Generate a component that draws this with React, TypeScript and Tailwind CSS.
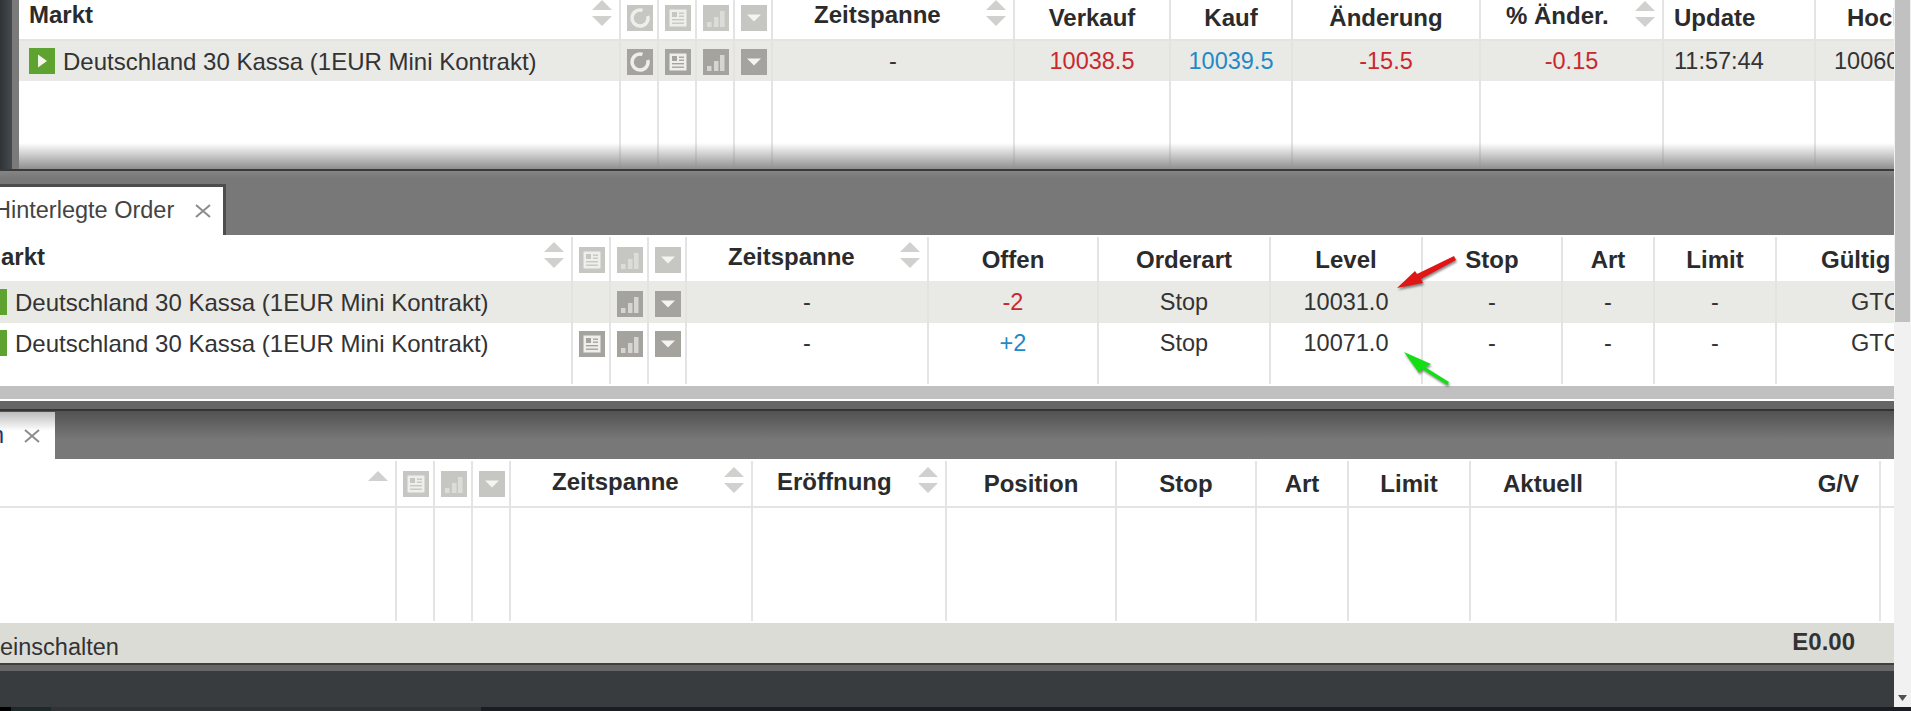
// App.tsx
// Trading platform panels: markets, pending orders, open positions
import type { ReactNode } from 'react';

const line = 'border-r-2 border-[#e4e4e4]';
const rowLine = 'border-r-2 border-[#e3e3e0]';

const red = 'text-[#c9282d]';
const blue = 'text-[#1e8ac6]';
const dark = 'text-[#333333]';

// Panel grids, all columns include their 2px right rule
const marketCols =
  'grid-cols-[602px_38px_38px_38px_38px_242px_156px_122px_188px_183px_152px_232px]';
const orderCols =
  'grid-cols-[602px_38px_38px_38px_242px_170px_172px_152px_140px_92px_122px_156px]';
const positionCols =
  'grid-cols-[397px_38px_38px_38px_242px_194px_170px_140px_92px_122px_146px_264px_14px]';

function SortArrows({ onlyUp }: { onlyUp?: boolean }) {
  return (
    <svg width="20" height="26" viewBox="0 0 20 26" className="shrink-0">
      <path d="M0 10 L10 0 L20 10 Z" fill="#d0d0ce" />
      {!onlyUp && <path d="M0 16 L20 16 L10 26 Z" fill="#d0d0ce" />}
    </svg>
  );
}

function IconBox({ light, children }: { light?: boolean; children: ReactNode }) {
  return (
    <svg width="26" height="26" viewBox="0 0 26 26" className="shrink-0">
      <rect width="26" height="26" fill={light ? '#c6c6c3' : '#a5a39d'} />
      {children}
    </svg>
  );
}

function RefreshIcon({ light }: { light?: boolean }) {
  return (
    <IconBox light={light}>
      <path d="M15.5 5.4 A8 8 0 1 0 20.8 11" fill="none" stroke="#eeeeea" strokeWidth="3.4" />
    </IconBox>
  );
}

function NewsIcon({ light }: { light?: boolean }) {
  const bg = light ? '#c6c6c3' : '#a5a39d';
  return (
    <IconBox light={light}>
      <rect x="4.5" y="4.5" width="17" height="17" fill="#eeeeea" />
      <rect x="7" y="7" width="5" height="5" fill={bg} />
      <rect x="14" y="7.5" width="5" height="1.4" fill={bg} />
      <rect x="14" y="10.5" width="5" height="1.4" fill={bg} />
      <rect x="7" y="14" width="12" height="1.4" fill={bg} />
      <rect x="7" y="17.5" width="12" height="1.4" fill={bg} />
    </IconBox>
  );
}

function ChartIcon({ light }: { light?: boolean }) {
  return (
    <IconBox light={light}>
      <g fill="#ffffff" opacity={light ? 0.4 : 0.55}>
        <rect x="4" y="17" width="4.5" height="5" />
        <rect x="11" y="12" width="4.5" height="10" />
        <rect x="17" y="6" width="4.5" height="16" />
      </g>
    </IconBox>
  );
}

function DropIcon({ light }: { light?: boolean }) {
  return (
    <IconBox light={light}>
      <path d="M6 9.5 L20 9.5 L13 16.5 Z" fill="#f4f4f2" />
    </IconBox>
  );
}

function PlayIcon() {
  return (
    <svg width="26" height="26" viewBox="0 0 26 26" className="shrink-0">
      <rect width="26" height="26" fill="#5ea32f" />
      <path d="M9 6.5 L18 13 L9 19.5 Z" fill="#f4f4ea" />
    </svg>
  );
}

function CloseX() {
  return (
    <svg width="16" height="14" viewBox="0 0 16 14" className="shrink-0">
      <path d="M1 1 L15 13 M15 1 L1 13" stroke="#8c8c8c" strokeWidth="2" />
    </svg>
  );
}

function Head({ children, className = '' }: { children?: ReactNode; className?: string }) {
  return (
    <div className={`flex h-full items-center justify-center overflow-hidden whitespace-nowrap text-[24px] font-bold text-[#2b2b2b] ${line} ${className}`}>
      {children}
    </div>
  );
}

function HeadSort({ label, className = '', onlyUp }: { label?: string; className?: string; onlyUp?: boolean }) {
  return (
    <div className={`flex h-full items-start justify-between overflow-hidden whitespace-nowrap pr-[7px] text-[24px] font-bold text-[#2b2b2b] ${line} ${className}`}>
      <span className="leading-[30px]">{label}</span>
      <SortArrows onlyUp={onlyUp} />
    </div>
  );
}

function IconCell({ children, className = '', rule = line }: { children?: ReactNode; className?: string; rule?: string }) {
  return <div className={`flex h-full items-start pl-[6px] ${rule} ${className}`}>{children}</div>;
}

function Val({ children, className = '', rule = line, tone = dark }: { children?: ReactNode; className?: string; rule?: string; tone?: string }) {
  return (
    <div className={`flex h-full items-center justify-center overflow-hidden whitespace-nowrap pt-[2px] text-[23.5px] ${tone} ${rule} ${className}`}>
      {children}
    </div>
  );
}

function Filler({ cols, count, className = '' }: { cols: string; count: number; className?: string }) {
  return (
    <div className={`grid min-h-0 flex-1 ${cols} ${className}`}>
      {Array.from({ length: count }).map((_, i) => (
        <div key={i} className={`h-full ${line}`} />
      ))}
    </div>
  );
}

function MarketName({ rule = line }: { rule?: string }) {
  return (
    <div className={`flex h-full items-center gap-[8px] overflow-hidden whitespace-nowrap pl-[10px] text-[24px] text-[#333333] ${rule}`}>
      <PlayIcon />
      <span className="pt-[2px]">Deutschland 30 Kassa (1EUR Mini Kontrakt)</span>
    </div>
  );
}

function MarketsPanel() {
  return (
    <div className="relative flex h-[171px] shrink-0 bg-[#6f6f6f]">
      <div className="w-[12px] bg-gradient-to-r from-[#2f3336] to-[#454b4f]" />
      <div className="w-[7px] bg-[#7a7a7a]" />
      <div className="flex min-w-0 flex-1 flex-col overflow-hidden bg-white pb-[2px]">
        <div className={`grid h-[39px] shrink-0 ${marketCols}`}>
          <HeadSort label="Markt" className="pl-[10px]" />
          <IconCell className="pt-[5px]"><RefreshIcon light /></IconCell>
          <IconCell className="pt-[5px]"><NewsIcon light /></IconCell>
          <IconCell className="pt-[5px]"><ChartIcon light /></IconCell>
          <IconCell className="pt-[5px]"><DropIcon light /></IconCell>
          <HeadSort label="Zeitspanne" className="pl-[41px]" />
          <Head className="pb-[4px]">Verkauf</Head>
          <Head className="pb-[4px]">Kauf</Head>
          <Head className="pb-[4px]">Änderung</Head>
          <HeadSort label="% Änder." className="pl-[25px] pt-[1px]" />
          <Head className="justify-start pb-[4px] pl-[10px]">Update</Head>
          <Head className="justify-start pb-[4px] pl-[31px]">Hoch</Head>
        </div>
        <div className={`grid h-[42px] shrink-0 border-t-2 border-[#e4e4e1] bg-[#e9e9e6] ${marketCols}`}>
          <MarketName rule={rowLine} />
          <IconCell rule={rowLine} className="pt-[8px]"><RefreshIcon /></IconCell>
          <IconCell rule={rowLine} className="pt-[8px]"><NewsIcon /></IconCell>
          <IconCell rule={rowLine} className="pt-[8px]"><ChartIcon /></IconCell>
          <IconCell rule={rowLine} className="pt-[8px]"><DropIcon /></IconCell>
          <Val rule={rowLine}>-</Val>
          <Val rule={rowLine} tone={red}>10038.5</Val>
          <Val rule={rowLine} tone={blue}>10039.5</Val>
          <Val rule={rowLine} tone={red}>-15.5</Val>
          <Val rule={rowLine} tone={red}>-0.15</Val>
          <Val rule={rowLine} className="justify-start pl-[10px]">11:57:44</Val>
          <Val rule={rowLine} className="justify-start pl-[18px]">10060.5</Val>
        </div>
        <Filler cols={marketCols} count={12} />
      </div>
      {/* shadow that the next panel drops on the table */}
      <div className="pointer-events-none absolute bottom-[2px] left-[19px] right-0 h-[26px] bg-gradient-to-b from-transparent to-[#8f8f8f]" />
      <div className="pointer-events-none absolute bottom-0 left-0 right-0 h-[2px] bg-[#3a3a3a]" />
    </div>
  );
}

function OrdersPanel() {
  return (
    <div className="flex h-[230px] shrink-0 flex-col overflow-hidden">
      <div className="flex h-[64px] shrink-0 items-end bg-gradient-to-b from-[#858585] to-[#787878] to-[12%]">
        <div className="flex h-[51px] w-[226px] items-center overflow-hidden border-r-[3px] border-t-[3px] border-[#4d4d4d] bg-white text-[23.5px] text-[#444444]">
          <span className="-ml-[6px] whitespace-nowrap">Hinterlegte Order</span>
          <span className="ml-[21px]"><CloseX /></span>
        </div>
      </div>
      <div className="flex h-[149px] shrink-0 flex-col overflow-hidden bg-white pt-[2px]">
        <div className={`-ml-[29px] grid h-[44px] shrink-0 ${orderCols}`}>
          <HeadSort label="Markt" className="pl-[10px] pt-[5px]" />
          <IconCell className="pt-[10px]"><NewsIcon light /></IconCell>
          <IconCell className="pt-[10px]"><ChartIcon light /></IconCell>
          <IconCell className="pt-[10px]"><DropIcon light /></IconCell>
          <HeadSort label="Zeitspanne" className="pl-[41px] pt-[5px]" />
          <Head className="pt-[1px]">Offen</Head>
          <Head className="pt-[1px]">Orderart</Head>
          <Head className="pt-[1px]">Level</Head>
          <Head className="pt-[1px]">Stop</Head>
          <Head className="pt-[1px]">Art</Head>
          <Head className="pt-[1px]">Limit</Head>
          <Head className="justify-start border-r-0 pl-[44px] pt-[1px]">Gültig</Head>
        </div>
        <div className={`-ml-[29px] grid h-[42px] shrink-0 bg-[#e9e9e6] ${orderCols}`}>
          <MarketName rule={rowLine} />
          <IconCell rule={rowLine} />
          <IconCell rule={rowLine} className="pt-[10px]"><ChartIcon /></IconCell>
          <IconCell rule={rowLine} className="pt-[10px]"><DropIcon /></IconCell>
          <Val rule={rowLine}>-</Val>
          <Val rule={rowLine} tone={red}>-2</Val>
          <Val rule={rowLine}>Stop</Val>
          <Val rule={rowLine}>10031.0</Val>
          <Val rule={rowLine}>-</Val>
          <Val rule={rowLine}>-</Val>
          <Val rule={rowLine}>-</Val>
          <Val rule="" className="justify-start pl-[74px]">GTC</Val>
        </div>
        <div className={`-ml-[29px] grid h-[40px] shrink-0 ${orderCols}`}>
          <MarketName />
          <IconCell className="pt-[8px]"><NewsIcon /></IconCell>
          <IconCell className="pt-[8px]"><ChartIcon /></IconCell>
          <IconCell className="pt-[8px]"><DropIcon /></IconCell>
          <Val>-</Val>
          <Val tone={blue}>+2</Val>
          <Val>Stop</Val>
          <Val>10071.0</Val>
          <Val>-</Val>
          <Val>-</Val>
          <Val>-</Val>
          <Val rule="" className="justify-start pl-[74px]">GTC</Val>
        </div>
        <Filler cols={orderCols} count={11} className="-ml-[29px]" />
      </div>
      <div className="flex h-[17px] shrink-0 flex-col bg-white py-[2px]">
        <div className="h-[13px] bg-[#c0c0c0]" />
      </div>
    </div>
  );
}

function PositionsPanel() {
  return (
    <div className="flex min-h-0 flex-1 flex-col overflow-hidden">
      <div className="h-[10px] shrink-0 border-b-2 border-[#343434] bg-[#666666]" />
      <div className="flex h-[48px] shrink-0 items-end bg-gradient-to-b from-[#525252] to-[#787878] to-[60%]">
        <div className="flex h-[47px] w-[55px] items-center overflow-hidden bg-gradient-to-b from-[#bdbdbd] to-white to-[40%] text-[23.5px] text-[#1a3a6a]">
          <span className="-ml-[9px] whitespace-nowrap">n</span>
          <span className="ml-[20px]"><CloseX /></span>
        </div>
      </div>
      <div className="flex h-[164px] shrink-0 flex-col overflow-hidden bg-white py-[2px]">
        <div className={`grid h-[47px] shrink-0 border-b-2 border-[#e4e4e4] ${positionCols}`}>
          <HeadSort className="pt-[10px]" onlyUp />
          <IconCell className="pt-[10px]"><NewsIcon light /></IconCell>
          <IconCell className="pt-[10px]"><ChartIcon light /></IconCell>
          <IconCell className="pt-[10px]"><DropIcon light /></IconCell>
          <HeadSort label="Zeitspanne" className="pl-[41px] pt-[6px]" />
          <HeadSort label="Eröffnung" className="pl-[24px] pt-[6px]" />
          <Head>Position</Head>
          <Head>Stop</Head>
          <Head>Art</Head>
          <Head>Limit</Head>
          <Head>Aktuell</Head>
          <Head className="justify-end pr-[20px]">G/V</Head>
          <div className="h-full border-0" />
        </div>
        <Filler cols={positionCols} count={12} />
      </div>
      <div className="flex h-[40px] shrink-0 items-start justify-between bg-[#dcdcd7] text-[#333333]">
        <span className="pt-[10px] text-[23.5px] leading-[28px]">einschalten</span>
        <span className="pr-[39px] pt-[5px] text-[24px] font-bold leading-[28px]">E0.00</span>
      </div>
      <div className="h-[8px] shrink-0 border-t-2 border-[#3f3f3f] bg-[#666666]" />
      <div className="min-h-0 flex-1 bg-[#383c3f]" />
    </div>
  );
}

function PageScrollbar() {
  return (
    <div className="flex w-[17px] shrink-0 flex-col items-center bg-[#f1f1f1]">
      <div className="h-[322px] w-[15px] bg-[#c1c1c1]" />
      <div className="flex-1" />
      <svg width="9" height="6" viewBox="0 0 9 6" className="mb-[6px]">
        <path d="M0 0 L9 0 L4.5 6 Z" fill="#505050" />
      </svg>
    </div>
  );
}

function Arrows() {
  return (
    <svg className="pointer-events-none absolute left-[1380px] top-[240px] drop-shadow-[1px_2px_1px_rgba(0,0,0,0.45)]" width="100" height="160" viewBox="1380 240 100 160">
      <path d="M1397 288 L1415 271 L1417 274 L1454 256 L1456 260 L1421 279 L1423 283 Z" fill="#e01515" />
      <path d="M1404 352 L1431 364 L1425 367 L1449 382 L1447 385 L1422 369 L1419 373 Z" fill="#12e012" />
    </svg>
  );
}

export default function App() {
  return (
    <div className="relative flex h-[711px] w-[1911px] flex-col overflow-hidden font-['Liberation_Sans',Arial,sans-serif]">
      <div className="flex h-[707px] shrink-0">
        <div className="flex w-[1894px] shrink-0 flex-col overflow-hidden">
          <MarketsPanel />
          <OrdersPanel />
          <PositionsPanel />
        </div>
        <PageScrollbar />
      </div>
      <div className="flex h-[4px] shrink-0">
        <div className="w-[11px] bg-black" />
        <div className="w-[40px] bg-[#1c2a2a]" />
        <div className="w-[430px] bg-[#2f3336]" />
        <div className="flex-1 bg-[#1a1e22]" />
      </div>
      <Arrows />
    </div>
  );
}
